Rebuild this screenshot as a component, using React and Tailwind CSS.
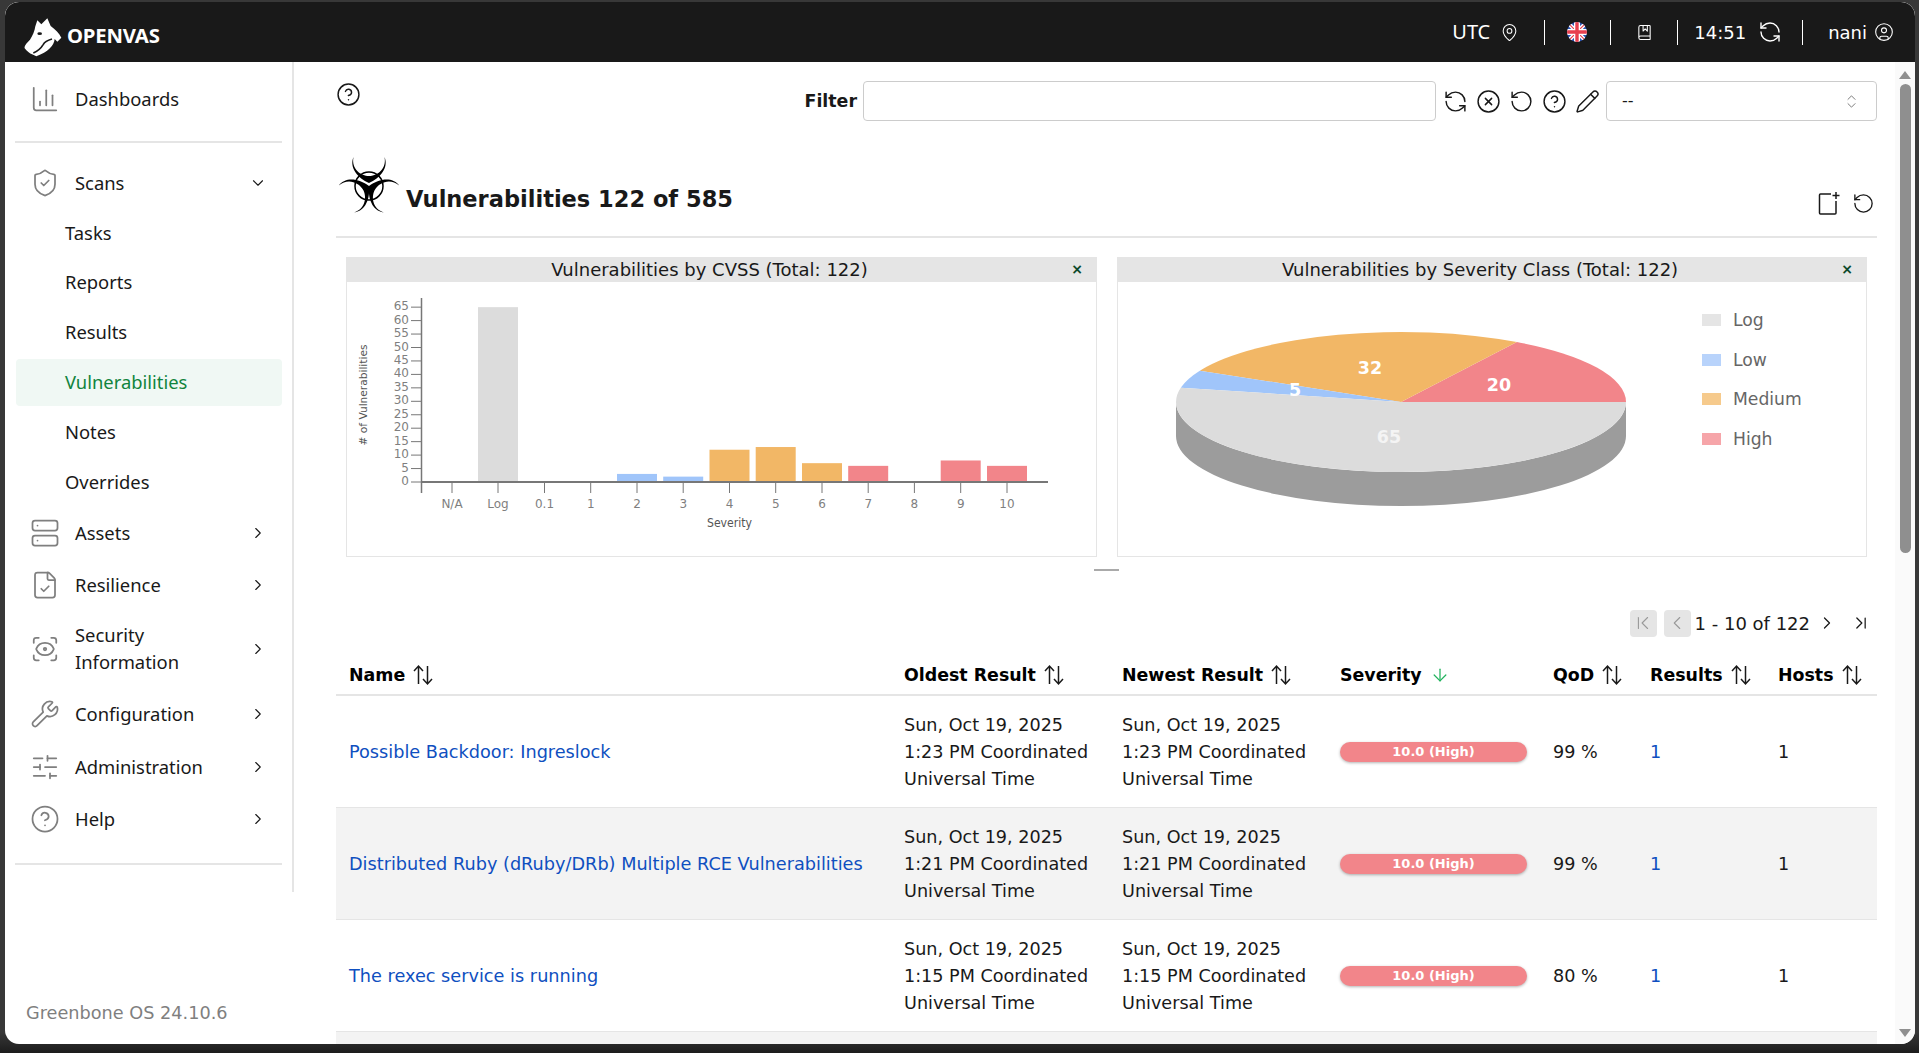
import React from 'react';
import {
  ArrowDown,
  BookMarked,
  ChartColumn,
  ChevronDown,
  ChevronFirst,
  ChevronLast,
  ChevronLeft,
  ChevronRight,
  ChevronsUpDown,
  CircleHelp,
  CircleUser,
  CircleX,
  FileCheck,
  MapPin,
  Pencil,
  RefreshCcw,
  RotateCcw,
  ScanEye,
  Server,
  ShieldCheck,
  SlidersHorizontal,
  Wrench,
} from 'lucide-react';

const FONT = "font-['DejaVu_Sans',sans-serif]";

const HorseLogo = () => (
  <svg width="50" height="50" viewBox="0 0 150 150" className="shrink-0 -ml-[6px]">
    <path
      fill="#fff"
      d="M52 46 L58 28 L70 40 L88 22 L98 45 C112 55 124 68 130 80 L118 92 L110 84 C108 105 90 122 55 136 L42 130 C36 128 26 120 20 112 C18 105 26 96 36 86 C44 74 50 60 52 46 Z"
    />
    <path d="M46 126 C60 120 70 110 76 100 C80 92 88 88 102 84" fill="none" stroke="#191919" strokeWidth="5" />
    <ellipse cx="65" cy="68" rx="7" ry="4" fill="#191919" />
  </svg>
);

const UkFlag = () => (
  <svg width="20" height="20" viewBox="0 0 20 20">
    <defs>
      <clipPath id="flag">
        <circle cx="10" cy="10" r="10" />
      </clipPath>
    </defs>
    <g clipPath="url(#flag)">
      <rect width="20" height="20" fill="#2b55b5" />
      <path d="M0 0 L20 20 M20 0 L0 20" stroke="#fff" strokeWidth="4" />
      <path d="M0 0 L20 20 M20 0 L0 20" stroke="#e8404f" strokeWidth="1.2" />
      <path d="M10 0 V20 M0 10 H20" stroke="#fff" strokeWidth="6" />
      <path d="M10 0 V20 M0 10 H20" stroke="#e8404f" strokeWidth="3.4" />
    </g>
  </svg>
);

const BLADE = 'M-15.5 -26 C-20 -15 -11 -5 0 0 C11 -5 20 -15 15.5 -26 C18 -14 8 -7 0 -7 C-8 -7 -18 -14 -15.5 -26 Z';

const Biohazard = () => (
  <svg width="66" height="60" viewBox="-33 -29 66 60" className="shrink-0">
    <g fill="#000">
      <path d={BLADE} />
      <path d={BLADE} transform="translate(0 3) rotate(120)" />
      <path d={BLADE} transform="translate(0 3) rotate(240)" />
    </g>
    <circle cx="0" cy="3" r="14" fill="none" stroke="#000" strokeWidth="1.5" />
  </svg>
);

const NewIcon = () => (
  <svg width="24" height="24" viewBox="0 0 24 24" fill="none" stroke="#191919" strokeWidth="1.5">
    <path d="M14 3 H3.5 a1 1 0 0 0 -1 1 V22 a1 1 0 0 0 1 1 H18 a1 1 0 0 0 1 -1 V10" />
    <path d="M19 1 V8 M15.5 4.5 H22.5" />
  </svg>
);

const SortIcon = () => (
  <svg width="22" height="22" viewBox="0 0 22 22" fill="none" stroke="#191919" strokeWidth="1.5" className="ml-[7px]">
    <path d="M6.5 20 V2 M2 7 L6.5 2 L11 7" />
    <path d="M15.5 2 V20 M11 15 L15.5 20 L20 15" />
  </svg>
);

const NavItem = ({ icon: Icon, label, open, noChevron, className = '' }) => (
  <div className={`flex items-center pl-[24px] pr-[25px] ${className}`}>
    <div className="w-[32px] flex justify-center shrink-0">
      <Icon size={30} strokeWidth={1.4} color="#7f7f7f" />
    </div>
    <div className="ml-[14px] flex-1 text-[18.4px] leading-[27px] text-[#191919] -mt-[2px]">{label}</div>
    {noChevron ? null : open ? (
      <ChevronDown size={18} color="#191919" strokeWidth={1.5} />
    ) : (
      <ChevronRight size={18} color="#191919" strokeWidth={1.5} />
    )}
  </div>
);

const SubItem = ({ label, active }) => (
  <div
    className={`h-[47px] ml-[11px] mr-[10px] pl-[49px] pb-[1px] flex items-center rounded-[4px] text-[18.4px] ${
      active ? 'bg-[#f0f8f4] text-[#11843d]' : 'text-[#191919]'
    }`}
  >
    {label}
  </div>
);

const Sidebar = () => (
  <aside className="w-[289px] shrink-0 flex flex-col font-['Noto_Sans',sans-serif]">
    <div className="h-[830px] border-r-2 border-[#e5e5e5]">
      <NavItem icon={ChartColumn} label="Dashboards" noChevron className="h-[58px] mt-[8px]" />
      <div className="h-[2px] bg-[#e5e5e5] mx-[10px] mt-[13px]" />
      <NavItem icon={ShieldCheck} label="Scans" open className="h-[40px] mt-[20px]" />
      <div className="mt-[7px]">
        <SubItem label="Tasks" />
        <div className="mt-[2px]"><SubItem label="Reports" /></div>
        <div className="mt-[3px]"><SubItem label="Results" /></div>
        <div className="mt-[3px]"><SubItem label="Vulnerabilities" active /></div>
        <div className="mt-[3px]"><SubItem label="Notes" /></div>
        <div className="mt-[3px]"><SubItem label="Overrides" /></div>
      </div>
      <NavItem icon={Server} label="Assets" className="h-[40px] mt-[7px]" />
      <NavItem icon={FileCheck} label="Resilience" className="h-[40px] mt-[12px]" />
      <NavItem icon={ScanEye} label={<>Security<br />Information</>} className="h-[54px] mt-[17px]" />
      <NavItem icon={Wrench} label="Configuration" className="h-[40px] mt-[18px]" />
      <NavItem icon={SlidersHorizontal} label="Administration" className="h-[40px] mt-[13px]" />
      <NavItem icon={CircleHelp} label="Help" className="h-[40px] mt-[12px]" />
      <div className="h-[2px] bg-[#e5e5e5] mx-[10px] mt-[24px]" />
    </div>
    <div className="mt-[108px] pl-[21px] text-[17.7px] text-[#7f7f7f] font-['DejaVu_Sans',sans-serif]">Greenbone OS 24.10.6</div>
  </aside>
);

const Header = () => (
  <header className="h-[60px] shrink-0 bg-[#191919] flex items-center justify-between rounded-t-[14px] pl-[19px] pr-[21px] text-white">
    <div className="flex items-center mt-[7px]">
      <HorseLogo />
      <span className="-ml-[1px] text-[20.3px] font-bold tracking-[-0.2px] font-['Noto_Sans',sans-serif]">OPENVAS</span>
    </div>
    <div className={`flex items-center text-[18px] ${FONT}`}>
      <span className="font-['Noto_Sans',sans-serif] text-[20px]">UTC</span>
      <MapPin size={19} strokeWidth={1.3} className="ml-[10px]" />
      <div className="w-[1px] h-[25px] bg-white ml-[25px]" />
      <div className="ml-[22px]"><UkFlag /></div>
      <div className="w-[1px] h-[25px] bg-white ml-[23px]" />
      <BookMarked size={17} strokeWidth={1.5} className="ml-[25px]" />
      <div className="w-[1px] h-[25px] bg-white ml-[24px]" />
      <span className="ml-[16px]">14:51</span>
      <RefreshCcw size={24} strokeWidth={1.4} className="ml-[12px]" />
      <div className="w-[1px] h-[25px] bg-white ml-[20px]" />
      <span className="ml-[25px]">nani</span>
      <CircleUser size={20} strokeWidth={1.3} className="ml-[7px]" />
    </div>
  </header>
);

const FilterBar = () => (
  <div className="flex items-start h-[39px] mt-[19px]">
    <CircleHelp size={25} strokeWidth={1.4} color="#191919" className="mt-[1px]" />
    <div className="ml-auto flex items-center">
      <span className="font-bold text-[17.4px] text-[#191919] mr-[6px]">Filter</span>
      <div className="w-[573px] h-[40px] rounded-[4px] border border-[#ccc]" />
      <div className="flex items-center gap-[8px] ml-[7px] text-[#191919]">
        <RefreshCcw size={25} strokeWidth={1.4} />
        <CircleX size={25} strokeWidth={1.4} />
        <RotateCcw size={25} strokeWidth={1.4} />
        <CircleHelp size={25} strokeWidth={1.4} />
        <Pencil size={25} strokeWidth={1.4} />
      </div>
      <div className="ml-[6px] w-[271px] h-[40px] rounded-[4px] border border-[#ccc] flex items-center justify-between pl-[15px] pr-[16px] text-[#191919] text-[16px]">
        <span>--</span>
        <ChevronsUpDown size={17} strokeWidth={1.2} color="#666" />
      </div>
    </div>
  </div>
);

const TitleRow = () => (
  <div className="flex items-end justify-between h-[96px] mt-[22px] border-b-2 border-[#e5e5e5]">
    <div className="flex items-end mb-[22px]">
      <Biohazard />
      <h1 className="ml-[4px] text-[22.5px] leading-[28px] font-bold text-[#191919] mb-[1px]">Vulnerabilities 122 of 585</h1>
    </div>
    <div className="flex items-center gap-[11px] mb-[21px] mr-[2px] text-[#191919]">
      <NewIcon />
      <RotateCcw size={23} strokeWidth={1.4} />
    </div>
  </div>
);

const PanelHeader = ({ title }) => (
  <div className="relative h-[25px] pr-[24px] pb-[1px] bg-[#e5e5e5] flex items-center justify-center text-[18px] text-[#191919] whitespace-nowrap">
    {title}
    <span className="absolute right-[14px] top-[2px] text-[14px] font-bold text-[#0b4a2a]">×</span>
  </div>
);

const bars = [
  { label: 'N/A', x: 106, value: 0 },
  { label: 'Log', x: 152, value: 65, color: '#dcdcdc' },
  { label: '0.1', x: 198.5, value: 0 },
  { label: '1', x: 244.7, value: 0 },
  { label: '2', x: 291, value: 3, color: '#a0c5fa' },
  { label: '3', x: 337.2, value: 2, color: '#a0c5fa' },
  { label: '4', x: 383.5, value: 12, color: '#f2b766' },
  { label: '5', x: 429.7, value: 13, color: '#f2b766' },
  { label: '6', x: 476, value: 7, color: '#f2b766' },
  { label: '7', x: 522.2, value: 6, color: '#f2858a' },
  { label: '8', x: 568.4, value: 0 },
  { label: '9', x: 614.7, value: 8, color: '#f2858a' },
  { label: '10', x: 661, value: 6, color: '#f2858a' },
];
const yTicks = [0, 5, 10, 15, 20, 25, 30, 35, 40, 45, 50, 55, 60, 65];
const BASE_Y = 200;
const UNIT = 2.69;

const BarChart = () => (
  <svg width="749" height="273" className="block -ml-[1px]">
    <g fontFamily="'DejaVu Sans', sans-serif" fill="#7f7f7f">
      <text
        transform="translate(21 113) rotate(-90)"
        textAnchor="middle"
        fontSize="11"
        fill="#555"
        textLength="101"
        lengthAdjust="spacingAndGlyphs"
      >
        # of Vulnerabilities
      </text>
      {bars.filter((b) => b.value > 0).map((b) => (
        <rect key={b.label} x={b.x - 20} y={BASE_Y - b.value * UNIT} width="40" height={b.value * UNIT} fill={b.color} />
      ))}
      <path d="M75.5 16 V211" stroke="#777" strokeWidth="1.5" />
      <path d={`M75 ${BASE_Y} H702`} stroke="#777" strokeWidth="2" />
      {yTicks.map((t) => (
        <g key={t}>
          <path d={`M65 ${BASE_Y - t * UNIT} H75`} stroke="#777" strokeWidth="1" />
          <text x="63" y={BASE_Y - t * UNIT + 3} textAnchor="end" fontSize="12">{t}</text>
        </g>
      ))}
      {bars.map((b) => (
        <g key={b.label}>
          <path d={`M${b.x} ${BASE_Y} V211`} stroke="#777" strokeWidth="1" />
          <text x={b.x} y="226" textAnchor="middle" fontSize="12">{b.label}</text>
        </g>
      ))}
      <text x="383.5" y="245" textAnchor="middle" fontSize="12" fill="#555" textLength="45" lengthAdjust="spacingAndGlyphs">Severity</text>
    </g>
  </svg>
);

const CX = 284;
const CY = 120;
const RX = 225;
const RY = 70;
const point = (deg) => {
  const a = (deg * Math.PI) / 180;
  return [CX + RX * Math.cos(a), CY - RY * Math.sin(a)];
};
const slice = (from, to, color) => {
  const [x1, y1] = point(from);
  const [x2, y2] = point(to);
  const large = to - from > 180 ? 1 : 0;
  return <path key={color} d={`M${CX} ${CY} L${x1} ${y1} A${RX} ${RY} 0 ${large} 0 ${x2} ${y2} Z`} fill={color} />;
};

const legend = [
  { label: 'Log', color: '#e5e5e5', y: 38 },
  { label: 'Low', color: '#b8d3fb', y: 78 },
  { label: 'Medium', color: '#f6ca8c', y: 117 },
  { label: 'High', color: '#f6a5a9', y: 157 },
];

const PieChart = () => (
  <svg width="748" height="273" className="block -ml-[1px]">
    <g fontFamily="'DejaVu Sans', sans-serif">
      <path
        d={`M${CX - RX} ${CY} A${RX} ${RY} 0 0 0 ${CX + RX} ${CY} V${CY + 34} A${RX} ${RY} 0 0 1 ${CX - RX} ${CY + 34} Z`}
        fill="#9c9c9c"
      />
      {slice(0, 59, '#f2858a')}
      {slice(59, 153.4, '#f2b766')}
      {slice(153.4, 168.2, '#a0c5fa')}
      {slice(168.2, 360, '#dcdcdc')}
      <g fontSize="17.5" fontWeight="bold" fill="#fff" textAnchor="middle">
        <text x="253" y="92">32</text>
        <text x="382" y="109">20</text>
        <text x="178" y="114">5</text>
        <text x="272" y="161" opacity="0.7">65</text>
      </g>
      {legend.map((l) => (
        <g key={l.label}>
          <rect x="585" y={l.y - 6} width="19" height="12" fill={l.color} />
          <text x="616" y={l.y + 6} fontSize="17.2" fill="#666">{l.label}</text>
        </g>
      ))}
    </g>
  </svg>
);

const Pagination = () => (
  <div className="flex items-center justify-end h-[28px] mt-[38px] text-[18px] text-[#191919] pr-[6px]">
    <div className="w-[27px] h-[27px] rounded-[4px] bg-[#e5e5e5] flex items-center justify-center"><ChevronFirst size={22} strokeWidth={1.2} color="#999" /></div>
    <div className="w-[27px] h-[27px] rounded-[4px] bg-[#e5e5e5] flex items-center justify-center ml-[7px]"><ChevronLeft size={22} strokeWidth={1.2} color="#999" /></div>
    <span className="ml-[4px]">1 - 10 of 122</span>
    <ChevronRight size={20} strokeWidth={1.5} className="ml-[7px]" />
    <ChevronLast size={20} strokeWidth={1.5} className="ml-[14px]" />
  </div>
);

const COLS = 'grid grid-cols-[555px_218px_218px_213px_97px_128px_1fr]';

const HeadCell = ({ label, children }) => (
  <div className="flex items-center text-[17.4px] font-bold text-[#000] pl-[13px] whitespace-nowrap">
    {label}
    {children}
  </div>
);

const rows = [
  { name: 'Possible Backdoor: Ingreslock', time: '1:23 PM', qod: '99 %' },
  { name: 'Distributed Ruby (dRuby/DRb) Multiple RCE Vulnerabilities', time: '1:21 PM', qod: '99 %', shade: true },
  { name: 'The rexec service is running', time: '1:15 PM', qod: '80 %' },
];

const DateCell = ({ time }) => (
  <div className="pl-[13px] pt-[2px] text-[17.6px] leading-[27px] text-[#191919] whitespace-nowrap flex flex-col justify-center">
    <div>Sun, Oct 19, 2025</div>
    <div>{time} Coordinated</div>
    <div>Universal Time</div>
  </div>
);

const Row = ({ row }) => (
  <div className={`${COLS} h-[112px] border-b border-[#e5e5e5] ${row.shade ? 'bg-[#f3f3f3]' : ''}`}>
    <div className="pl-[13px] pt-[2px] flex items-center text-[17.72px] text-[#0f4fc0] whitespace-nowrap">{row.name}</div>
    <DateCell time={row.time} />
    <DateCell time={row.time} />
    <div className="pl-[13px] flex items-center">
      <div className="w-[187px] h-[20px] rounded-[10px] bg-[#f2858a] shadow-[0_1px_3px_rgba(0,0,0,0.3)] flex items-center justify-center text-white font-bold text-[13px]">
        10.0 (High)
      </div>
    </div>
    <div className="pl-[13px] pt-[2px] flex items-center text-[17.6px] text-[#191919]">{row.qod}</div>
    <div className="pl-[13px] pt-[2px] flex items-center text-[17.6px] text-[#0f4fc0]">1</div>
    <div className="pl-[13px] pt-[2px] flex items-center text-[17.6px] text-[#191919]">1</div>
  </div>
);

const Scrollbar = () => (
  <div className="w-[20px] shrink-0 bg-[#fafafa] flex flex-col items-center pt-[9px]">
    <div className="w-0 h-0 border-x-[6px] border-x-transparent border-b-[8px] border-b-[#8f8f8f]" />
    <div className="w-[11px] h-[469px] rounded-[6px] bg-[#8f8f8f] mt-[5px]" />
    <div className="flex-1" />
    <div className="w-0 h-0 border-x-[6px] border-x-transparent border-t-[8px] border-t-[#8f8f8f] mb-[7px]" />
  </div>
);

const App = () => (
  <div className="h-[1053px] w-full overflow-hidden bg-[linear-gradient(#383838,#383838_98%,#1c1c1c)] pt-[2px] pl-[5px] pr-[4px] pb-[9px]">
    <div className="h-full flex flex-col bg-white rounded-[14px] overflow-hidden">
      <Header />
      <div className="flex flex-1 min-h-0">
        <Sidebar />
        <main className={`flex-1 min-w-0 overflow-hidden pl-[42px] pr-[18px] ${FONT}`}>
          <FilterBar />
          <TitleRow />
          <div className="grid grid-cols-[751px_750px] gap-[20px] mt-[19px] ml-[10px]">
            <div>
              <PanelHeader title="Vulnerabilities by CVSS (Total: 122)" />
              <div className="h-[275px] border border-t-0 border-[#e5e5e5] overflow-hidden"><BarChart /></div>
            </div>
            <div>
              <PanelHeader title="Vulnerabilities by Severity Class (Total: 122)" />
              <div className="h-[275px] border border-t-0 border-[#e5e5e5] overflow-hidden"><PieChart /></div>
            </div>
          </div>
          <div className="h-[2px] w-[25px] bg-[#aaa] mx-auto mt-[12px]" />
          <Pagination />
          <div className={`${COLS} h-[59px] border-b-2 border-[#e5e5e5] pt-[19px]`}>
            <HeadCell label="Name"><SortIcon /></HeadCell>
            <HeadCell label="Oldest Result"><SortIcon /></HeadCell>
            <HeadCell label="Newest Result"><SortIcon /></HeadCell>
            <HeadCell label="Severity"><ArrowDown size={20} strokeWidth={1.5} color="#22b35e" className="ml-[8px]" /></HeadCell>
            <HeadCell label="QoD"><SortIcon /></HeadCell>
            <HeadCell label="Results"><SortIcon /></HeadCell>
            <HeadCell label="Hosts"><SortIcon /></HeadCell>
          </div>
          {rows.map((r) => <Row key={r.name} row={r} />)}
          <div className="h-[40px] bg-[#f3f3f3]" />
        </main>
        <Scrollbar />
      </div>
    </div>
  </div>
);

export default App;
